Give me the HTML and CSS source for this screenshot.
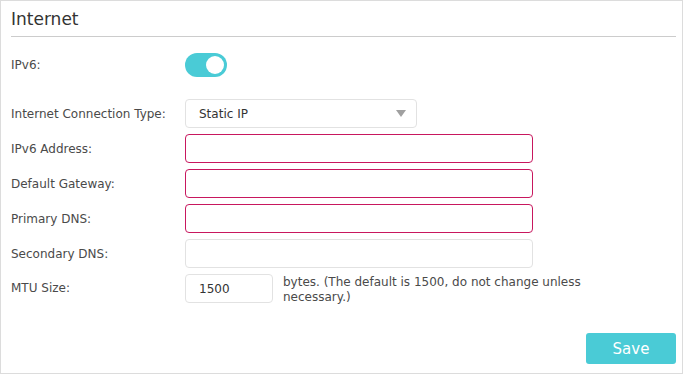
FILE: index.html
```html
<!DOCTYPE html>
<html lang="en">
<head>
    <meta charset="UTF-8">
    <title>Internet</title>
    <link rel="stylesheet" href="styles.css">
</head>
<body>
    <div class="panel">
        <h2 class="panel-title">Internet</h2>

        <div class="form">
            <div class="form-row toggle-row">
                <label>IPv6:</label>
                <span class="toggle on"><span class="knob"></span></span>
            </div>

            <div class="form-row select-row">
                <label>Internet Connection Type:</label>
                <div class="select">
                    <span>Static IP</span>
                    <span class="arrow"></span>
                </div>
            </div>

            <div class="form-row">
                <label>IPv6 Address:</label>
                <input type="text" class="field error">
            </div>
            <div class="form-row">
                <label>Default Gateway:</label>
                <input type="text" class="field error">
            </div>
            <div class="form-row">
                <label>Primary DNS:</label>
                <input type="text" class="field error">
            </div>
            <div class="form-row">
                <label>Secondary DNS:</label>
                <input type="text" class="field">
            </div>
            <div class="form-row mtu-row">
                <label>MTU Size:</label>
                <input type="text" class="field short" value="1500">
                <p class="hint">bytes. (The default is 1500, do not change unless necessary.)</p>
            </div>
        </div>

        <div class="actions">
            <button class="save-btn">Save</button>
        </div>
    </div>
</body>
</html>
```

FILE: styles.css
```css
:root {
    --accent: #4acbd6;
    --text: #4a4a4a;
    --border: #e2e2e2;
    --error: #c8175e;
}

body {
    margin: 0;
    font-family: "DejaVu Sans", Verdana, sans-serif;
    color: var(--text);
    background: #fff;
}

.panel {
    box-sizing: border-box;
    width: 683px;
    height: 374px;
    border: 1px solid #dcdcdc;
    padding: 0 6px 0 10px;
    display: flex;
    flex-direction: column;
}

.panel-title {
    margin: 0;
    height: 35px;
    line-height: 36px;
    font-size: 17px;
    font-weight: normal;
    color: #333;
    border-bottom: 1px solid #cccccc;
}

.form {
    padding-top: 16px;
}

.form-row {
    display: flex;
    align-items: center;
    margin-bottom: 6px;
    font-size: 12px;
}

.form-row label {
    width: 174px;
    flex-shrink: 0;
}

.toggle-row {
    margin-bottom: 22px;
}

.toggle {
    position: relative;
    width: 42px;
    height: 24px;
    border-radius: 12px;
    background: #ccc;
}

.toggle.on {
    background: var(--accent);
}

.toggle .knob {
    position: absolute;
    top: 3px;
    left: 3px;
    width: 18px;
    height: 18px;
    border-radius: 50%;
    background: #fff;
}

.toggle.on .knob {
    left: 21px;
}

.select {
    box-sizing: border-box;
    width: 232px;
    height: 29px;
    border: 1px solid var(--border);
    border-radius: 4px;
    padding: 0 10px 0 13px;
    display: flex;
    align-items: center;
    justify-content: space-between;
    color: #333;
}

.arrow {
    width: 0;
    height: 0;
    border-left: 5px solid transparent;
    border-right: 5px solid transparent;
    border-top: 7px solid #a0a0a0;
}

.field {
    box-sizing: border-box;
    width: 348px;
    height: 29px;
    margin: 0;
    border: 1px solid var(--border);
    border-radius: 4px;
    padding: 0 13px;
    font-family: inherit;
    font-size: 12px;
    color: #333;
    outline: none;
}

.field.error {
    border-color: var(--error);
}

.field.short {
    width: 88px;
}

.mtu-row {
    align-items: flex-start;
}

.mtu-row label {
    line-height: 29px;
}

.hint {
    margin: 1px 0 0 10px;
    width: 310px;
    line-height: 15px;
}

.actions {
    margin-top: auto;
    display: flex;
    justify-content: flex-end;
    padding-bottom: 9px;
}

.save-btn {
    width: 90px;
    height: 31px;
    border: none;
    border-radius: 3px;
    background: var(--accent);
    color: #fff;
    font-family: inherit;
    font-size: 15px;
}
```
